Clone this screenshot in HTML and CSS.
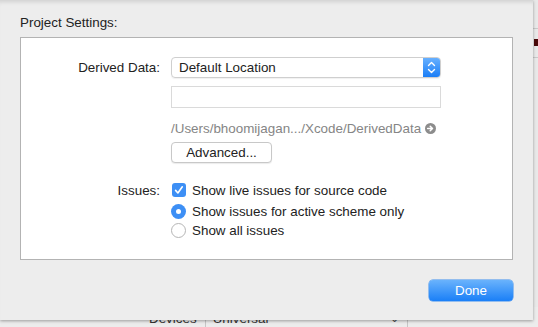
FILE: index.html
```html
<!DOCTYPE html>
<html lang="en">
<head>
  <meta charset="UTF-8" />
  <title>Project Settings</title>
  <link rel="stylesheet" href="styles.css">
</head>
<body>
  <div class="window">
    <div class="window-side">
      <div class="side-line"></div>
      <div class="side-mark"></div>
      <div class="side-line"></div>
    </div>
    <div class="window-bottom">
      <span class="bottom-label">Devices</span>
      <span class="bottom-sep"></span>
      <span class="bottom-value">Universal</span>
      <span class="bottom-chevron">&#8964;</span>
      <span class="bottom-sep"></span>
    </div>

    <div class="sheet">
      <div class="sheet-title">Project Settings:</div>
      <div class="settings-box">
        <div class="row row-popup">
          <span class="row-label">Derived Data:</span>
          <div class="popup">
            <span class="popup-text">Default Location</span>
            <span class="popup-stepper">
              <svg width="9" height="13" viewBox="0 0 9 13" fill="none" stroke="#fff" stroke-width="1.4" stroke-linecap="round" stroke-linejoin="round"><path d="M1.5 4.5l3-3 3 3M1.5 8.5l3 3 3-3"></path></svg>
            </span>
          </div>
        </div>
        <div class="row row-field">
          <span class="row-label"></span>
          <div class="text-field"></div>
        </div>
        <div class="row row-path">
          <span class="row-label"></span>
          <span class="path-text">/Users/bhoomijagan.../Xcode/DerivedData</span>
          <svg class="path-arrow" width="11" height="11" viewBox="0 0 11 11"><circle cx="5.5" cy="5.5" r="5.5" fill="#8c8c8c"></circle><path d="M2.6 5.5h4.6M5.2 3.2l2.3 2.3-2.3 2.3" stroke="#fff" stroke-width="1.5" fill="none" stroke-linecap="round" stroke-linejoin="round"></path></svg>
        </div>
        <div class="row row-button">
          <span class="row-label"></span>
          <button class="push-btn">Advanced...</button>
        </div>
        <div class="row row-check">
          <span class="row-label">Issues:</span>
          <span class="checkbox">
            <svg width="14" height="14" viewBox="0 0 14 14" fill="none" stroke="#fff" stroke-width="1.6" stroke-linecap="round" stroke-linejoin="round"><path d="M3.6 7.4l2.3 2.6 4.4-6.2"></path></svg>
          </span>
          <span class="option-text">Show live issues for source code</span>
        </div>
        <div class="row row-radio">
          <span class="row-label"></span>
          <span class="radio on"></span>
          <span class="option-text">Show issues for active scheme only</span>
        </div>
        <div class="row row-radio second">
          <span class="row-label"></span>
          <span class="radio"></span>
          <span class="option-text">Show all issues</span>
        </div>
      </div>
      <div class="sheet-footer">
        <button class="done-btn">Done</button>
      </div>
    </div>
  </div>
</body>
</html>
```

FILE: styles.css
```css
* { margin: 0; padding: 0; box-sizing: border-box; }
body {
  background: #e8e8e8;
  font-family: 'Liberation Sans', Arial, sans-serif;
  font-size: 13.4px;
  color: #222;
  overflow: hidden;
}
.window {
  position: relative;
  width: 538px;
  height: 327px;
  background: #ececec;
}
.window-side {
  position: absolute;
  top: 0;
  right: 0;
  width: 5px;
  height: 100%;
  background: #e9e9e9;
  padding-top: 28px;
}
.side-line { height: 1px; background: #c9c9c9; }
.side-mark {
  height: 7px;
  margin: 10px 0 11px 1px;
  background: #4a0a0a;
}
.window-bottom {
  position: absolute;
  left: 0;
  bottom: 0;
  width: 100%;
  height: 20px;
  display: flex;
  align-items: flex-end;
  padding-left: 149px;
  line-height: 14px;
  color: #333;
  background: #ececec;
}
.bottom-label { margin-bottom: 1px; }
.bottom-sep {
  width: 1px;
  height: 18px;
  background: #c6c6c6;
  margin: 0 7px 0 8px;
}
.bottom-value { margin-bottom: 1px; width: 177px; }
.bottom-chevron { font-size: 11px; color: #444; margin-bottom: 2px; }
.sheet {
  position: absolute;
  top: 0;
  left: 0;
  width: 533px;
  height: 320px;
  background: #ededed;
  box-shadow: 0 1px 3px rgba(0, 0, 0, 0.35), inset 0 5px 4px -3px rgba(0, 0, 0, 0.12);
  padding: 15px 20px 0 20px;
}
.sheet-title {
  line-height: 16px;
  color: #222;
}
.settings-box {
  margin-top: 6px;
  width: 493px;
  height: 223px;
  background: #fff;
  border: 1px solid #b3b3b3;
  padding-top: 19px;
}
.row {
  display: flex;
  align-items: center;
}
.row-label {
  width: 139px;
  flex: none;
  text-align: right;
  margin-right: 11px;
  color: #222;
}
.popup {
  width: 270px;
  height: 21px;
  display: flex;
  align-items: center;
  border: 1px solid #cfcfcf;
  border-radius: 4px;
  box-shadow: 0 1px 1px rgba(0, 0, 0, 0.06);
  overflow: hidden;
}
.popup-text { flex: 1; padding-left: 7px; }
.popup-stepper {
  width: 17px;
  height: 100%;
  display: flex;
  align-items: center;
  justify-content: center;
  background: linear-gradient(#67b0ff, #1b7ef6);
}
.row-field { margin-top: 8px; }
.text-field {
  width: 270px;
  height: 22px;
  border: 1px solid #dadada;
  background: #fff;
}
.row-path { margin-top: 12px; height: 16px; }
.path-text { color: #858585; }
.path-arrow { margin-left: 4px; }
.row-button { margin-top: 6px; }
.push-btn {
  width: 101px;
  height: 21px;
  background: #fff;
  border: 1px solid #c8c8c8;
  border-radius: 4px;
  box-shadow: 0 1px 1px rgba(0, 0, 0, 0.08);
  font: inherit;
  color: #222;
}
.row-check { margin-top: 18px; height: 18px; }
.checkbox {
  width: 14px;
  height: 14px;
  margin-left: 1px;
  border-radius: 3px;
  background: #3d8ff5;
  display: flex;
}
.option-text { margin-left: 6px; }
.row-radio { margin-top: 3px; height: 18px; }
.row-radio.second { margin-top: 1px; }
.radio {
  width: 15px;
  height: 15px;
  border-radius: 50%;
  border: 1px solid #b5b5b5;
  background: #fff;
  display: flex;
  align-items: center;
  justify-content: center;
}
.radio.on {
  border: none;
  background: #3d8ff5;
}
.radio.on::after {
  content: '';
  width: 5px;
  height: 5px;
  border-radius: 50%;
  background: #fff;
}
.sheet-footer {
  display: flex;
  justify-content: flex-end;
  margin-top: 20px;
}
.done-btn {
  width: 84px;
  height: 21px;
  border: none;
  border-radius: 4px;
  background: linear-gradient(#6ab3fc, #1a7ff7);
  box-shadow: 0 0 0 0.5px #3a8df0;
  color: #fff;
  font: inherit;
}
```
